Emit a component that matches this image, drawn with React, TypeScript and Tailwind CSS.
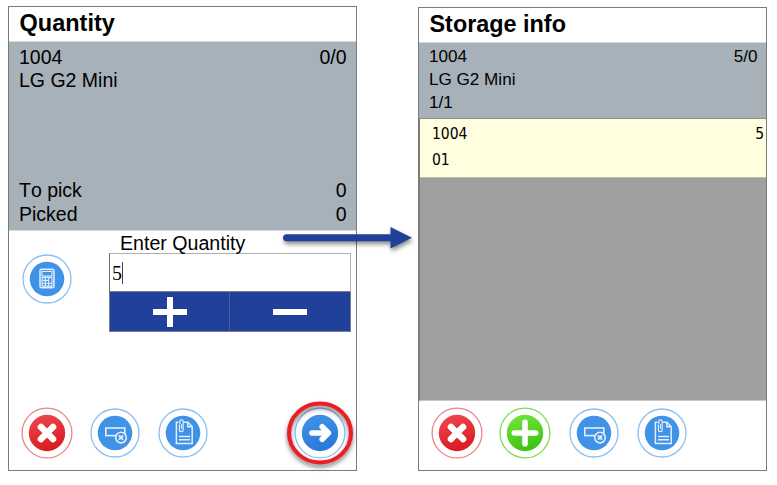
import type { ReactNode } from "react";

type Tone = "red" | "green" | "blue" | "action";

const tones: Record<Tone, { ring: string; from: string; to: string; outer: number; inner: number }> = {
  red: { ring: "#ee8287", from: "#ee4a50", to: "#dc1c24", outer: 24.9, inner: 18.2 },
  green: { ring: "#7fdc50", from: "#78e63c", to: "#3fc516", outer: 24.9, inner: 18.2 },
  blue: { ring: "#8cbff2", from: "#3f92e6", to: "#3f92e6", outer: 24, inner: 17.3 },
  action: { ring: "#8cbff2", from: "#4194e8", to: "#2c79d9", outer: 24.9, inner: 18.2 },
};

function RoundIcon({ id, tone, label, children }: { id: string; tone: Tone; label: string; children: ReactNode }) {
  const t = tones[tone];
  return (
    <button aria-label={label} className="block size-[52px] shrink-0">
      <svg width="52" height="52" viewBox="-26 -26 52 52" fill="none">
        <defs>
          <linearGradient id={id} x1="0" y1="0" x2="0.3" y2="1">
            <stop offset="0" stopColor={t.from} />
            <stop offset="1" stopColor={t.to} />
          </linearGradient>
        </defs>
        <circle r={t.outer} stroke={t.ring} strokeWidth="1.3" fill="#fff" />
        <circle r={t.inner} fill={`url(#${id})`} />
        {children}
      </svg>
    </button>
  );
}

const Cross = () => <path d="M-6 -6L6 6M6 -6L-6 6" stroke="#fff" strokeWidth="6.6" strokeLinecap="round" />;

const Plus = () => <path d="M-10.7 0H10.7M0 -10.7V10.7" stroke="#fff" strokeWidth="5.6" strokeLinecap="round" />;

const Arrow = () => (
  <path d="M-8 0H8M2.2 -6.2L8.4 0L2.2 6.2" stroke="#fff" strokeWidth="5.6" strokeLinecap="round" strokeLinejoin="round" />
);

const ClearField = () => (
  <g stroke="#e2effc" strokeWidth="1.6">
    <rect x="-9.2" y="-5" width="19" height="7.6" />
    <circle cx="6" cy="4.6" r="5.3" fill="#3f92e6" />
    <path d="M3.9 2.5L8.1 6.7M8.1 2.5L3.9 6.7" strokeWidth="1.9" />
  </g>
);

const ClipDocument = () => (
  <g stroke="#e2effc" strokeWidth="1.5">
    <path d="M0.8 -10.8H5L9.2 -6.3V10.6H-6.6V-10.8H-4.6" />
    <path d="M4.8 -10.8V-6.3H9.2" />
    <path d="M-4 3.6H7M-4 6.8H7" />
    <path d="M-3.6 -8.5V-3.2A1.9 1.9 0 0 0 0.2 -3.2V-11.4A1.7 1.7 0 0 0 -3.2 -11.4V-9" strokeWidth="1.2" />
    <path d="M-1.6 -9V-4" strokeWidth="1" />
  </g>
);

const Calculator = () => (
  <g stroke="#e2effc" strokeWidth="1.5">
    <rect x="-7" y="-9.8" width="14" height="18.6" rx="1.6" />
    <rect x="-5" y="-7.6" width="10" height="4.6" strokeWidth="1.1" />
    <path d="M-5 -1.6H5M-5 1.4H2M-5 4.3H5M-5 7.1H5M-4.9 -1.6V7.1M-1.6 -1.6V7.1M1.7 -1.6V7.1M5 -1.6V7.1" strokeWidth="1.1" />
  </g>
);

function Line({ left, right }: { left: string; right?: string }) {
  return (
    <div className="flex justify-between whitespace-nowrap">
      <span>{left}</span>
      <span>{right}</span>
    </div>
  );
}

function QuantityScreen() {
  return (
    <section className="mt-1.5 flex h-[465px] w-[349px] flex-col border border-[#7b7b7b] bg-white">
      <h1 className="h-[35px] border-b border-[#d6dbde] pl-[10.5px] text-[23.5px] leading-[33px] font-bold">Quantity</h1>
      <div className="flex h-[188px] flex-col justify-between bg-[#a7b1b9] pt-1 pr-[9.5px] pb-1 pl-[10px] text-[19.5px] leading-[23.4px]">
        <div>
          <Line left="1004" right="0/0" />
          <Line left="LG G2 Mini" />
        </div>
        <div>
          <Line left="To pick" right="0" />
          <Line left="Picked" right="0" />
        </div>
      </div>
      <div className="flex border-t border-[#d6dbde]">
        <div className="w-[100px] pt-[22px] pl-3">
          <RoundIcon id="calc" tone="blue" label="Calculator"><Calculator /></RoundIcon>
        </div>
        <div className="w-[242px]">
          <div className="h-[22px] pt-px pl-[11px] text-[19.6px] leading-[22px] whitespace-nowrap">Enter Quantity</div>
          <div className="flex h-[39px] items-center border border-[#b0b0b0] border-b-[#777d90] border-l-[#707070] pl-[2px] font-['Liberation_Serif',serif] text-[20px]">
            <span className="leading-[38px]">5</span>
            <span className="h-[22px] w-px bg-[#444]" />
          </div>
          <div className="grid h-[40px] grid-cols-2 border border-t-0 border-[#777d90] bg-[#21409a]">
            <button aria-label="Increase" className="flex items-center justify-center border-r border-[#4d5f92]">
              <svg width="34" height="30" viewBox="0 0 34 30"><path d="M0 12h14V0h6v12h14v6H20v12h-6V18H0z" fill="#fff" /></svg>
            </button>
            <button aria-label="Decrease" className="flex items-center justify-center">
              <span className="h-1.5 w-[34px] bg-white" />
            </button>
          </div>
        </div>
      </div>
      <div className="mt-auto mb-[11px] flex items-center pl-[11.5px]">
        <RoundIcon id="cancel-l" tone="red" label="Cancel"><Cross /></RoundIcon>
        <div className="ml-[16.5px]"><RoundIcon id="clear-l" tone="blue" label="Clear"><ClearField /></RoundIcon></div>
        <div className="ml-4"><RoundIcon id="doc-l" tone="blue" label="Document"><ClipDocument /></RoundIcon></div>
        <div className="relative ml-[84.5px]">
          <RoundIcon id="next" tone="action" label="Next"><Arrow /></RoundIcon>
          <svg className="absolute -top-3 -left-3 drop-shadow-[0_3px_2px_rgba(0,0,0,0.5)]" width="76" height="76" viewBox="-38 -38 76 76">
            <ellipse rx="31" ry="29.5" fill="none" stroke="#ee1c25" strokeWidth="4" />
          </svg>
        </div>
      </div>
    </section>
  );
}

function StorageScreen() {
  return (
    <section className="mt-[7px] flex h-[464px] w-[349px] flex-col border border-[#7b7b7b] bg-white">
      <h1 className="h-[35px] border-b border-[#d6dbde] pl-[10.5px] text-[23.4px] leading-[33px] font-bold">Storage info</h1>
      <div className="h-[75px] bg-[#a7b1b9] pt-[1.5px] pr-[8.5px] pl-[10px] text-[17.1px] leading-[23.3px]">
        <Line left="1004" right="5/0" />
        <Line left="LG G2 Mini" />
        <Line left="1/1" />
      </div>
      <div className="h-[283px] border-t border-b border-l border-t-[#8b8d8e] border-b-[#c8c8c8] border-l-[#7b7b7b] bg-[#a0a0a0]">
        <div className="h-[59px] border-b border-[#bdbda8] bg-[#ffffdf] pt-[3px] pr-[2px] pl-3 font-['DejaVu_Sans_Condensed','Noto_Sans',sans-serif] text-[15.5px] leading-[25.5px]">
          <Line left="1004" right="5" />
          <Line left="01" />
        </div>
      </div>
      <div className="mt-auto mb-[11px] flex items-center pl-[11.5px]">
        <RoundIcon id="cancel-r" tone="red" label="Cancel"><Cross /></RoundIcon>
        <div className="ml-4"><RoundIcon id="add" tone="green" label="Add"><Plus /></RoundIcon></div>
        <div className="ml-[17px]"><RoundIcon id="clear-r" tone="blue" label="Clear"><ClearField /></RoundIcon></div>
        <div className="ml-4"><RoundIcon id="doc-r" tone="blue" label="Document"><ClipDocument /></RoundIcon></div>
      </div>
    </section>
  );
}

export default function App() {
  return (
    <main className="relative flex h-[485px] w-[777px] items-start gap-[61px] overflow-hidden bg-white pl-2 font-['Liberation_Sans',Arial,sans-serif] text-black [font-kerning:none]">
      <QuantityScreen />
      <StorageScreen />
      <svg className="absolute top-[220px] left-[276px] drop-shadow-[1px_3px_2px_rgba(0,0,0,0.45)]" width="144" height="40" viewBox="276 220 144 40">
        <path d="M286.5 237.8H392" stroke="#21409a" strokeWidth="7" strokeLinecap="round" />
        <path d="M390.5 227L412 237.8L390.5 248.6z" fill="#21409a" />
      </svg>
    </main>
  );
}
